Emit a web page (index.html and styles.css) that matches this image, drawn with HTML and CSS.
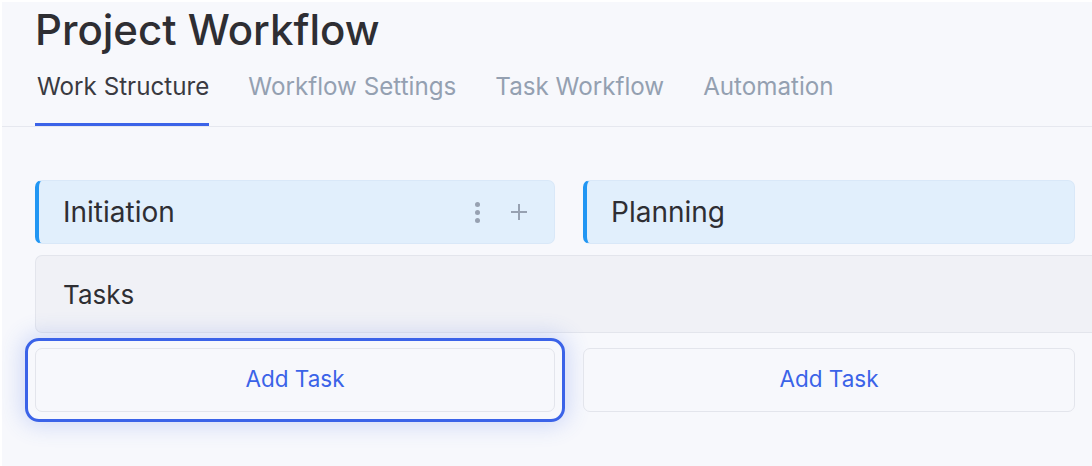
FILE: index.html
```html
<!DOCTYPE html>
<html lang="en">
<head>
<meta charset="utf-8">
<title>Project Workflow</title>
<link rel="stylesheet" href="styles.css">
</head>
<body>
<div class="page">
  <h1 class="title">Project Workflow</h1>
  <nav class="tabs">
    <span class="tab active">Work Structure</span>
    <span class="tab">Workflow Settings</span>
    <span class="tab">Task Workflow</span>
    <span class="tab">Automation</span>
  </nav>
  <section class="board">
    <div class="stage-header">
      <span class="stage-name">Initiation</span>
      <div class="actions">
        <span class="dots"><i></i><i></i><i></i></span>
        <svg class="plus" width="18" height="18" viewBox="0 0 18 18"><path d="M9 1v16M1 9h16" stroke="#97a1b1" stroke-width="2" fill="none"/></svg>
      </div>
    </div>
    <div class="stage-header">
      <span class="stage-name">Planning</span>
    </div>
    <div class="tasks-row">Tasks</div>
    <button class="add-task focused">Add Task</button>
    <button class="add-task">Add Task</button>
  </section>
</div>
</body>
</html>
```

FILE: styles.css
```css
html, body {
  margin: 0;
  height: 100%;
}
body {
  background: #ffffff;
  padding: 2px 0 0 2px;
  box-sizing: border-box;
  overflow: hidden;
  font-family: Inter, "Noto Sans", sans-serif;
}
.page {
  background: #f7f8fc;
  min-height: 464px;
  padding: 4px 0 0 33px;
  box-sizing: border-box;
}
.title {
  margin: 0;
  font-size: 42px;
  line-height: 48px;
  font-weight: 500;
  color: #2e2e33;
  letter-spacing: 0;
}
.tabs {
  display: flex;
  gap: 37px;
  margin: 18px 0 0 -33px;
  padding-left: 33px;
  border-bottom: 1px solid #e6e8ef;
}
.tab {
  font-size: 24.2px;
  line-height: 30px;
  padding: 0 0 21px 2px;
  border-bottom: 3px solid transparent;
  color: #94a0b1;
}
.tab.active {
  color: #3a3a41;
  border-bottom-color: #3b63e8;
}
.board {
  display: grid;
  grid-template-columns: 520px 492px;
  column-gap: 28px;
  margin-top: 53px;
}
.stage-header {
  height: 64px;
  box-sizing: border-box;
  display: flex;
  align-items: center;
  background: #e1effc;
  border: 1px solid #d9e8f8;
  border-left: 4px solid #2196f3;
  border-radius: 7px;
  padding: 0 26px 0 24px;
  font-size: 28px;
  color: #2e2e33;
}
.actions {
  margin-left: auto;
  display: flex;
  align-items: center;
  gap: 30px;
}
.dots {
  display: flex;
  flex-direction: column;
  gap: 3px;
}
.dots i {
  width: 5px;
  height: 5px;
  border-radius: 50%;
  background: #97a1b1;
}
.plus {
  display: block;
}
.tasks-row {
  grid-column: 1 / -1;
  margin: 11px -17px 15px 0;
  height: 78px;
  box-sizing: border-box;
  display: flex;
  align-items: center;
  padding-left: 27px;
  background: #f0f1f6;
  border: 1px solid #e3e5ec;
  border-right: none;
  border-radius: 7px 0 0 7px;
  font-size: 26px;
  color: #2e2e33;
}
.add-task {
  position: relative;
  height: 64px;
  box-sizing: border-box;
  padding: 0 0 3px;
  background: #f7f8fc;
  border: 1px solid #e3e5ec;
  border-radius: 7px;
  font-family: Inter, "Noto Sans", sans-serif;
  font-size: 22.5px;
  color: #3b63e8;
  cursor: pointer;
}
.add-task.focused::after {
  content: "";
  position: absolute;
  inset: -11px;
  border: 3px solid #3b63e8;
  border-radius: 14px;
  box-shadow: 0 0 22px 4px rgba(59, 99, 232, 0.2);
  pointer-events: none;
}
```
